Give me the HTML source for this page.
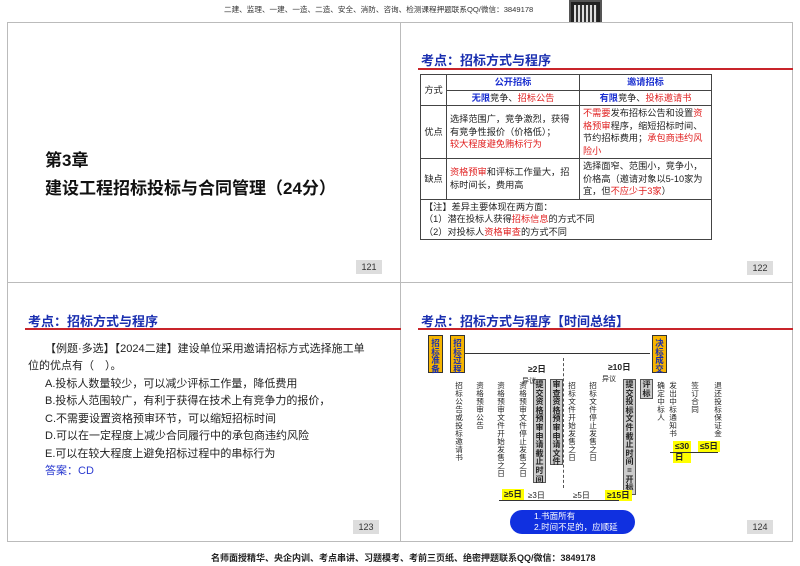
<!DOCTYPE html>
<html><head><meta charset="utf-8"><style>
*{margin:0;padding:0;box-sizing:border-box}
body{width:800px;height:566px;background:#fff;position:relative;overflow:hidden;font-family:"Liberation Sans","Noto Sans CJK SC",sans-serif;color:#222}
.a{position:absolute;white-space:nowrap}
.sl{position:absolute;border:1px solid #bbb;background:#fff}
.tt{position:absolute;font-weight:bold;color:#1a2fb0;font-size:13px}
.ln{position:absolute;height:2px;background:#c8242a}
.pn{position:absolute;width:26px;height:14px;background:#ddd;font-size:9px;text-align:center;line-height:14px;color:#333}
.r{color:#e02020}.b{color:#1a2fd0;font-weight:bold}
table{border-collapse:collapse;font-size:9.2px;line-height:12.5px}
td{border:1px solid #444;padding:1px 3px;vertical-align:middle}
.v,.yb,.gb{position:absolute;width:10px;white-space:normal;word-break:break-all;text-align:center;font-size:7.6px;line-height:8px}
.yb{background:#f7b500;border:1.5px solid #333;font-weight:bold;color:#1a2fb0;width:15px;padding-top:3px;font-size:8.5px;line-height:8.5px}
.gb{background:#ccc;border:1px solid #555;font-weight:bold;width:13px;font-size:8px;line-height:8.6px;padding-top:1px}
.y{position:absolute;background:#ff0;font-size:8.5px;font-weight:bold;padding:0 2px;white-space:nowrap;line-height:11px}
.hl{position:absolute;height:1px;background:#333}
</style></head><body>
<div class="a" style="left:224px;top:4px;font-size:7.6px;color:#333">二建、监理、一建、一造、二造、安全、消防、咨询、检测课程押题联系QQ/微信：3849178</div>
<div class="a" style="left:569px;top:0;width:33px;height:33px;background:#222;border:2px solid #555"></div>
<div class="a" style="left:574px;top:5px;width:23px;height:23px;background:repeating-linear-gradient(90deg,#ddd 0 2px,#333 2px 4px)"></div>

<div class="sl" style="left:7px;top:22px;width:394px;height:261px"></div>
<div class="sl" style="left:400px;top:22px;width:393px;height:261px"></div>
<div class="sl" style="left:7px;top:282px;width:394px;height:260px"></div>
<div class="sl" style="left:400px;top:282px;width:393px;height:260px"></div>

<!-- 121 -->
<div class="a" style="left:45px;top:146px;font-size:17px;font-weight:bold;color:#111">第3章</div>
<div class="a" style="left:45px;top:174px;font-size:17px;font-weight:bold;color:#111">建设工程招标投标与合同管理（24分）</div>
<div class="pn" style="left:356px;top:260px">121</div>

<!-- 122 -->
<div class="tt" style="left:421px;top:50px">考点：招标方式与程序</div>
<div class="ln" style="left:418px;top:68px;width:375px"></div>
<table class="a" style="left:420px;top:74px;width:292px;white-space:normal">
<tr><td rowspan="2" style="width:26px;text-align:center;white-space:nowrap;padding:0 1px">方式</td><td class="b" style="text-align:center;width:133px">公开招标</td><td class="b" style="text-align:center">邀请招标</td></tr>
<tr><td style="text-align:center"><span class="b">无限</span>竞争、<span class="r">招标公告</span></td><td style="text-align:center"><span class="b">有限</span>竞争、<span class="r">投标邀请书</span></td></tr>
<tr><td style="text-align:center;white-space:nowrap;padding:0 1px">优点</td><td>选择范围广，竞争激烈，获得有竞争性报价（价格低）；<br><span class="r">较大程度避免贿标行为</span></td><td><span class="r">不需要</span>发布招标公告和设置<span class="r">资格预审</span>程序，缩短招标时间、节约招标费用；<span class="r">承包商违约风险小</span></td></tr>
<tr><td style="text-align:center;white-space:nowrap;padding:0 1px">缺点</td><td><span class="r">资格预审</span>和评标工作量大，招标时间长，费用高</td><td>选择面窄、范围小，竞争小，价格高（邀请对象以5-10家为宜，但<span class="r">不应少于3家</span>）</td></tr>
<tr><td colspan="3">【注】差异主要体现在两方面：<br>（1）潜在投标人获得<span class="r">招标信息</span>的方式不同<br>（2）对投标人<span class="r">资格审查</span>的方式不同</td></tr>
</table>
<div class="pn" style="left:747px;top:261px">122</div>

<!-- 123 -->
<div class="tt" style="left:28px;top:311px">考点：招标方式与程序</div>
<div class="ln" style="left:25px;top:328px;width:376px"></div>
<div class="a" style="left:45px;top:340px;font-size:11px">【例题·多选】【2024二建】建设单位采用邀请招标方式选择施工单</div>
<div class="a" style="left:28px;top:357px;font-size:11px">位的优点有（　）。</div>
<div class="a" style="left:45px;top:375px;font-size:11px">A.投标人数量较少，可以减少评标工作量，降低费用</div>
<div class="a" style="left:45px;top:392px;font-size:11px">B.投标人范围较广，有利于获得在技术上有竞争力的报价，</div>
<div class="a" style="left:45px;top:410px;font-size:11px">C.不需要设置资格预审环节，可以缩短招标时间</div>
<div class="a" style="left:45px;top:427px;font-size:11px">D.可以在一定程度上减少合同履行中的承包商违约风险</div>
<div class="a" style="left:45px;top:445px;font-size:11px">E.可以在较大程度上避免招标过程中的串标行为</div>
<div class="a" style="left:45px;top:462px;font-size:11px;color:#2a3ad0">答案：CD</div>
<div class="pn" style="left:353px;top:520px">123</div>

<!-- 124 -->
<div class="tt" style="left:421px;top:311px">考点：招标方式与程序【时间总结】</div>
<div class="ln" style="left:418px;top:328px;width:375px"></div>
<div class="yb" style="left:428px;top:335px;height:38px">招标准备</div>
<div class="yb" style="left:450px;top:335px;height:38px">招标过程</div>
<div class="yb" style="left:652px;top:335px;height:38px">决标成交</div>
<div class="hl" style="left:465px;top:353px;width:185px"></div>
<div class="v" style="left:454px;top:382px">招标公告或投标邀请书</div>
<div class="v" style="left:475px;top:382px">资格预审公告</div>
<div class="v" style="left:496px;top:382px">资格预审文件开始发售之日</div>
<div class="v" style="left:518px;top:382px">资格预审文件停止发售之日</div>
<div class="gb" style="left:533px;top:379px;height:104px">提交资格预审申请截止时间</div>
<div class="gb" style="left:550px;top:379px;height:86px">审查资格预审申请文件</div>
<div class="v" style="left:567px;top:382px">招标文件开始发售之日</div>
<div class="v" style="left:588px;top:382px">招标文件停止发售之日</div>
<div class="gb" style="left:623px;top:379px;height:116px">提交投标文件截止时间=开标</div>
<div class="gb" style="left:640px;top:379px;height:20px">评标</div>
<div class="v" style="left:656px;top:382px">确定中标人</div>
<div class="v" style="left:668px;top:382px">发出中标通知书</div>
<div class="v" style="left:690px;top:382px">签订合同</div>
<div class="v" style="left:713px;top:382px">退还投标保证金</div>
<div class="a" style="left:528px;top:363px;font-size:8.5px;font-weight:bold">≥2日</div>
<div class="a" style="left:608px;top:361px;font-size:8.5px;font-weight:bold">≥10日</div>
<div class="a" style="left:522px;top:376px;font-size:7px">异议</div>
<div class="a" style="left:602px;top:374px;font-size:7px">异议</div>
<div class="a" style="left:563px;top:358px;width:1px;height:130px;border-left:1px dashed #555"></div>
<div class="y" style="left:502px;top:489px">≥5日</div>
<div class="a" style="left:528px;top:490px;font-size:8px">≥3日</div>
<div class="a" style="left:573px;top:490px;font-size:8px">≥5日</div>
<div class="y" style="left:605px;top:490px">≥15日</div>
<div class="y" style="left:673px;top:441px">≤30<br>日</div>
<div class="y" style="left:698px;top:441px">≤5日</div>
<div class="hl" style="left:499px;top:500px;width:120px"></div>
<div class="hl" style="left:670px;top:452px;width:48px"></div>
<div class="a" style="left:510px;top:510px;width:125px;height:24px;background:#1030e0;border-radius:12px;color:#fff;font-size:8.5px;line-height:11px;padding:1px 0 0 24px">1.书面所有<br>2.时间不足的，应顺延</div>
<div class="pn" style="left:747px;top:520px">124</div>

<div class="a" style="left:211px;top:551px;font-size:9px;font-weight:bold;color:#222">名师面授精华、央企内训、考点串讲、习题模考、考前三页纸、绝密押题联系QQ/微信：3849178</div>
</body></html>
